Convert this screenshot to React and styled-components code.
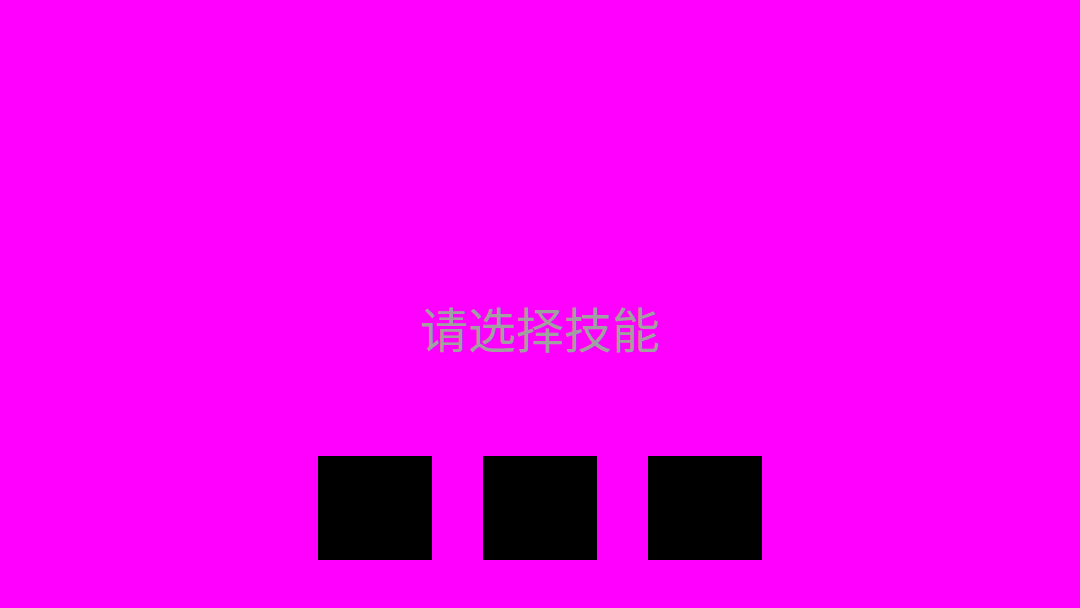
import React from "react";
import styled, { createGlobalStyle } from "styled-components";

const Global = createGlobalStyle`
  html, body { margin: 0; padding: 0; background: #ff00ff; }
  body { font-family: "Noto Sans CJK SC", "Noto Sans", sans-serif; }
`;

const Screen = styled.div`
  width: 100vw;
  height: 100vh;
  background: #ff00ff;
  display: flex;
  flex-direction: column;
  align-items: center;
  padding-top: 303px;
  box-sizing: border-box;
  overflow: hidden;
`;

const Prompt = styled.div`
  font-size: 48px;
  line-height: 48px;
  color: #a0a0a0;
  font-family: "Noto Sans CJK SC", sans-serif;
  -webkit-font-smoothing: antialiased;
`;

const SlotRow = styled.div`
  display: flex;
  gap: 51px;
  margin-top: 105px;
`;

const Slot = styled.div`
  width: 114px;
  height: 104px;
  background: #000;
`;

export default function App() {
  return (
    <>
      <Global />
      <Screen>
        <Prompt>请选择技能</Prompt>
        <SlotRow>
          <Slot />
          <Slot />
          <Slot />
        </SlotRow>
      </Screen>
    </>
  );
}
